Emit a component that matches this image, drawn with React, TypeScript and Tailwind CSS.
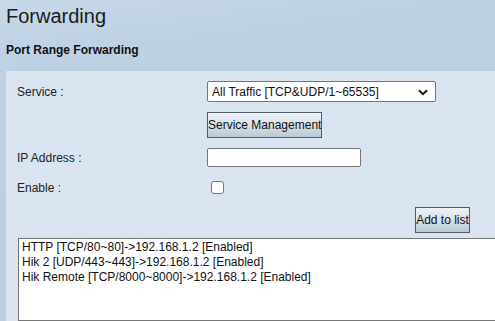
import React from "react";

const rules = [
  "HTTP [TCP/80~80]->192.168.1.2 [Enabled]",
  "Hik 2 [UDP/443~443]->192.168.1.2 [Enabled]",
  "Hik Remote [TCP/8000~8000]->192.168.1.2 [Enabled]",
];

const btn =
  "h-[26px] border border-[#505c68] bg-[linear-gradient(180deg,#eef2f6_0%,#d9e3ea_45%,#b9c9d4_100%)] text-[12px] leading-none text-[#111] px-0 whitespace-nowrap overflow-hidden";

export default function App() {
  return (
    <div className="w-[495px] h-[321px] overflow-hidden flex flex-col bg-[linear-gradient(172deg,#c7d8e9_0%,#bdd0e4_18%,#bccfe3_100%)] font-['Liberation_Sans',Arial,sans-serif] text-[#222]">
      <h1 className="pl-[6px] pt-[5px] text-[20px] leading-[22px] text-[#1c1c1c]">Forwarding</h1>
      <div className="pl-[6px] mt-[16px] text-[12px] leading-[14px] font-bold text-[#111]">
        Port Range Forwarding
      </div>

      {/* panel */}
      <div className="ml-[6px] mt-[14px] flex-1 bg-[#d9e4f0] pt-[10px] flex flex-col">
        <div className="flex items-center h-[21px]">
          <span className="w-[201px] pl-[11px] text-[12px]">Service :</span>
          <div className="relative w-[229px] h-[21px] bg-white border border-[#767676] rounded-[2px] flex items-center pl-[4px] text-[12px] text-[#111]">
            All Traffic [TCP&amp;UDP/1~65535]
            <svg className="absolute right-[7px] top-[7px]" width="10" height="7" viewBox="0 0 10 7">
              <path d="M1 1.2 L5 5.2 L9 1.2" fill="none" stroke="#111" strokeWidth="2" />
            </svg>
          </div>
        </div>

        <div className="flex mt-[10px]">
          <span className="w-[201px]" />
          <button className={`${btn} w-[115px]`}>Service Management</button>
        </div>

        <div className="flex items-center h-[19px] mt-[10px]">
          <span className="w-[201px] pl-[11px] text-[12px]">IP Address :</span>
          <input className="w-[154px] h-[19px] bg-white border border-[#767676] rounded-[2px] outline-none" />
        </div>

        <div className="flex items-center h-[13px] mt-[14px]">
          <span className="w-[205px] pl-[11px] text-[12px]">Enable :</span>
          <div className="w-[13px] h-[13px] bg-white border border-[#767676] rounded-[3px]" />
        </div>

        <div className="flex mt-[13px]">
          <button className={`${btn} ml-[409px] w-[55px]`}>Add to list</button>
        </div>

        <div className="ml-[12px] mt-[5px] flex-1 w-[500px] bg-white border border-[#767676] pl-[3px] pt-[1px] text-[12px] leading-[15px] text-[#111]">
          {rules.map((r) => (
            <div key={r}>{r}</div>
          ))}
        </div>
      </div>
    </div>
  );
}
